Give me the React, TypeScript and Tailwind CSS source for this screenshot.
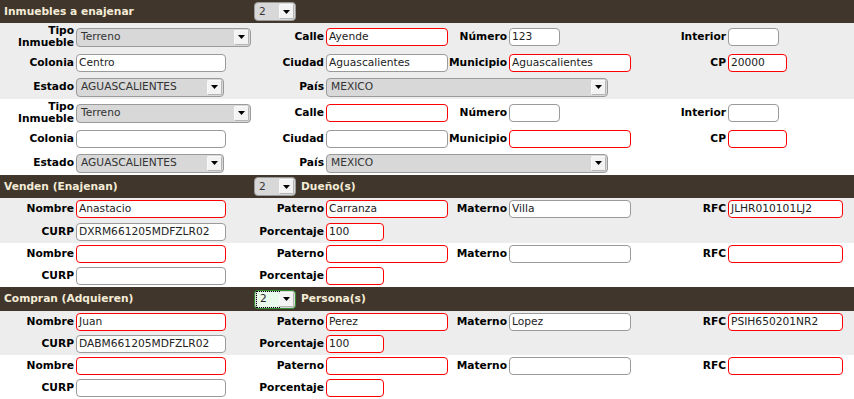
const font = { fontFamily: '"DejaVu Sans", Verdana, sans-serif' }

function Arrow() {
    return (
        <span className="flex h-[15px] w-[15px] items-center justify-center rounded-[2px] border border-[#b5b5b5] border-t-[#fafafa] border-l-[#fafafa] bg-[#f3f3f3]">
            <svg width="7" height="4" viewBox="0 0 7 4"><path d="M0 0h7L3.5 4z" fill="#000" /></svg>
        </span>
    )
}

function Select({ value, w, focused }: { value: string; w: string; focused?: boolean }) {
    return (
        <div
            className={`flex h-[19px] items-center justify-between rounded-[4px] border bg-[#d8d8d8] pr-[1px] font-normal ${w} ${focused ? 'border-[#2f8f2f]' : 'border-[#9a9a9a]'}`}
        >
            {focused ? (
                <span className="ml-[2px] flex h-[15px] w-[22px] items-center bg-[#eafaea] pl-[3px] text-[#222] outline-1 outline-dotted outline-black">{value}</span>
            ) : (
                <span className="pl-[4px] text-[#333]">{value}</span>
            )}
            <Arrow />
        </div>
    )
}

function Input({ value = '', w, req }: { value?: string; w: string; req?: boolean }) {
    return (
        <div
            className={`flex h-[18px] items-center rounded-[4px] border bg-white px-[2px] text-[#222] ${w} ${req ? 'border-[#ff0000]' : 'border-[#9a9a9a]'}`}
        >
            {value}
        </div>
    )
}

function Label({ children, span }: { children: React.ReactNode; span?: string }) {
    return <div className={`pr-[2px] text-right font-bold leading-[12px] text-black ${span ?? ''}`}>{children}</div>
}

const cols = 'grid grid-cols-[76px_176px_74px_123px_60px_131px_88px_1fr] items-center'

function Header({ title, extra, h }: { title: string; extra?: string; h: string }) {
    return (
        <div className={`flex items-center bg-[#40362c] text-[#f4ecd6] ${h}`}>
            <div className="w-[254px] pl-[4px] font-bold">{title}</div>
            <Select value="2" w="w-[42px]" focused={extra === 'Persona(s)'} />
            {extra && <span className="ml-[5px] font-bold">{extra}</span>}
        </div>
    )
}

type Prop = { calle: string; numero: string; colonia: string; ciudad: string; municipio: string; cp: string }

function Property({ p, bg }: { p: Prop; bg: string }) {
    return (
        <div className={bg}>
            <div className={`${cols} h-[28px]`}>
                <Label>Tipo<br />Inmueble</Label>
                <div><Select value="Terreno" w="w-[175px]" /></div>
                <Label>Calle</Label>
                <Input value={p.calle} w="w-[122px]" req />
                <Label>Número</Label>
                <div><Input value={p.numero} w="w-[51px]" /></div>
                <Label>Interior</Label>
                <Input w="w-[51px]" />
            </div>
            <div className={`${cols} h-[24px]`}>
                <Label>Colonia</Label>
                <Input value={p.colonia} w="w-[150px]" />
                <Label>Ciudad</Label>
                <Input value={p.ciudad} w="w-[122px]" />
                <Label>Municipio</Label>
                <Input value={p.municipio} w="w-[122px]" req />
                <Label>CP</Label>
                <Input value={p.cp} w="w-[59px]" req />
            </div>
            <div className={`${cols} h-[24px]`}>
                <Label>Estado</Label>
                <div><Select value="AGUASCALIENTES" w="w-[148px]" /></div>
                <Label>País</Label>
                <div className="col-span-5"><Select value="MEXICO" w="w-[282px]" /></div>
            </div>
        </div>
    )
}

type Person = { nombre: string; paterno: string; materno: string; rfc: string; curp: string; pct: string }

function PersonRows({ p, bg, h2 }: { p: Person; bg: string; h2: string }) {
    return (
        <div className={bg}>
            <div className={`${cols} h-[22px]`}>
                <Label>Nombre</Label>
                <Input value={p.nombre} w="w-[150px]" req />
                <Label>Paterno</Label>
                <Input value={p.paterno} w="w-[122px]" req />
                <Label>Materno</Label>
                <Input value={p.materno} w="w-[122px]" />
                <Label>RFC</Label>
                <Input value={p.rfc} w="w-[115px]" req />
            </div>
            <div className={`${cols} ${h2}`}>
                <Label>CURP</Label>
                <Input value={p.curp} w="w-[150px]" />
                <Label>Porcentaje</Label>
                <Input value={p.pct} w="w-[58px]" req />
            </div>
        </div>
    )
}

const emptyProp: Prop = { calle: '', numero: '', colonia: '', ciudad: '', municipio: '', cp: '' }
const emptyPerson: Person = { nombre: '', paterno: '', materno: '', rfc: '', curp: '', pct: '' }

export default function App() {
    return (
        <div className="h-[399px] w-[854px] overflow-hidden bg-white text-[10.67px]" style={font}>
            <Header title="Inmuebles a enajenar" h="h-[23px]" />
            <Property
                bg="bg-[#ededed]"
                p={{ calle: 'Ayende', numero: '123', colonia: 'Centro', ciudad: 'Aguascalientes', municipio: 'Aguascalientes', cp: '20000' }}
            />
            <Property bg="bg-white" p={emptyProp} />
            <Header title="Venden (Enajenan)" extra="Dueño(s)" h="h-[23px]" />
            <PersonRows
                bg="bg-[#ededed]"
                h2="h-[23px]"
                p={{ nombre: 'Anastacio', paterno: 'Carranza', materno: 'Villa', rfc: 'JLHR010101LJ2', curp: 'DXRM661205MDFZLR02', pct: '100' }}
            />
            <PersonRows bg="bg-white" h2="h-[22px]" p={emptyPerson} />
            <Header title="Compran (Adquieren)" extra="Persona(s)" h="h-[24px]" />
            <PersonRows
                bg="bg-[#ededed]"
                h2="h-[22px]"
                p={{ nombre: 'Juan', paterno: 'Perez', materno: 'Lopez', rfc: 'PSIH650201NR2', curp: 'DABM661205MDFZLR02', pct: '100' }}
            />
            <PersonRows bg="bg-white" h2="h-[22px]" p={emptyPerson} />
        </div>
    )
}
